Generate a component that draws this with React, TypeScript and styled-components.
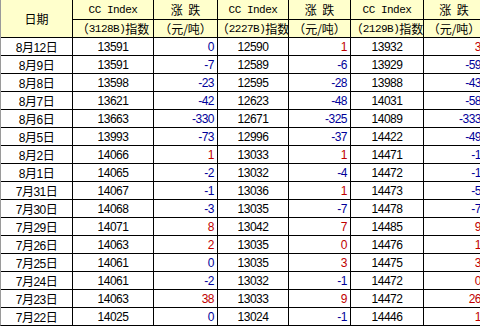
import { createGlobalStyle } from "styled-components";
import styled from "styled-components";

const GlobalStyle = createGlobalStyle`
  html, body {
    margin: 0;
    padding: 0;
    background: #fff;
    overflow: hidden;
  }
  body {
    font-family: "Liberation Sans", "Noto Sans CJK SC", sans-serif;
    font-size: 12px;
    color: #000;
  }
`;

const Grid = styled.div`
  display: grid;
  grid-template-columns: 71px 80px 63px 70px 61px 72px 60px;
  grid-template-rows: 19px repeat(17, 17px);
  gap: 1px;
  width: max-content;
  background: #000;
  border-left: 1px solid #9a9a9a;
  border-bottom: 1px solid #000;
`;

const HeadCell = styled.div<{ $rows?: number }>`
  grid-row: span ${props => props.$rows || 1};
  display: flex;
  align-items: center;
  justify-content: center;
  white-space: nowrap;
  background: #ffffcc;
  font-family: "Noto Sans CJK SC", sans-serif;
  font-size: 12px;
`;

const Latin = styled.span`
  font-family: "Liberation Mono", monospace;
  font-size: 11px;
  letter-spacing: -0.5px;
`;

const Cell = styled.div<{ $right?: boolean }>`
  display: flex;
  align-items: center;
  justify-content: ${props => (props.$right ? "flex-end" : "center")};
  padding-right: ${props => (props.$right ? "3px" : "0")};
  background: #fff;
  white-space: nowrap;
  letter-spacing: -0.5px;
`;

const Change = styled(Cell)<{ $up: boolean }>`
  color: ${props => (props.$up ? "#c00000" : "#000099")};
`;

// "+0" marks a zero that the source shows in red
type Diff = number | "+0";

const rows: [string, number, Diff, number, Diff, number, Diff][] = [
  ["8月12日", 13591, 0, 12590, 1, 13932, 3],
  ["8月9日", 13591, -7, 12589, -6, 13929, -59],
  ["8月8日", 13598, -23, 12595, -28, 13988, -43],
  ["8月7日", 13621, -42, 12623, -48, 14031, -58],
  ["8月6日", 13663, -330, 12671, -325, 14089, -333],
  ["8月5日", 13993, -73, 12996, -37, 14422, -49],
  ["8月2日", 14066, 1, 13033, 1, 14471, -1],
  ["8月1日", 14065, -2, 13032, -4, 14472, -1],
  ["7月31日", 14067, -1, 13036, 1, 14473, -5],
  ["7月30日", 14068, -3, 13035, -7, 14478, -7],
  ["7月29日", 14071, 8, 13042, 7, 14485, 9],
  ["7月26日", 14063, 2, 13035, "+0", 14476, 1],
  ["7月25日", 14061, 0, 13035, 3, 14475, 3],
  ["7月24日", 14061, -2, 13032, -1, 14472, "+0"],
  ["7月23日", 14063, 38, 13033, 9, 14472, 26],
  ["7月22日", 14025, 0, 13024, -1, 14446, 1],
];

const codes = ["3128B", "2227B", "2129B"];

const DiffCell = ({ value }: { value: Diff }) => (
  <Change $right $up={value === "+0" || value > 0}>
    {value === "+0" ? 0 : value}
  </Change>
);

const App = () => (
  <>
    <GlobalStyle />
    <Grid>
      <HeadCell $rows={2}>日期</HeadCell>
      {codes.map(code => [
        <HeadCell key={code + "a"}>
          <Latin>CC Index</Latin>
        </HeadCell>,
        <HeadCell key={code + "b"}>涨&nbsp;&nbsp;跌</HeadCell>,
      ])}
      {codes.map(code => [
        <HeadCell key={code + "c"}>
          （<Latin>{code})</Latin>指数
        </HeadCell>,
        <HeadCell key={code + "d"}>（元/吨）</HeadCell>,
      ])}
      {rows.map(([date, i1, d1, i2, d2, i3, d3]) => [
        <Cell key={date}>{date}</Cell>,
        <Cell key={date + 1}>{i1}</Cell>,
        <DiffCell key={date + 2} value={d1} />,
        <Cell key={date + 3}>{i2}</Cell>,
        <DiffCell key={date + 4} value={d2} />,
        <Cell key={date + 5}>{i3}</Cell>,
        <DiffCell key={date + 6} value={d3} />,
      ])}
    </Grid>
  </>
);

export default App;
